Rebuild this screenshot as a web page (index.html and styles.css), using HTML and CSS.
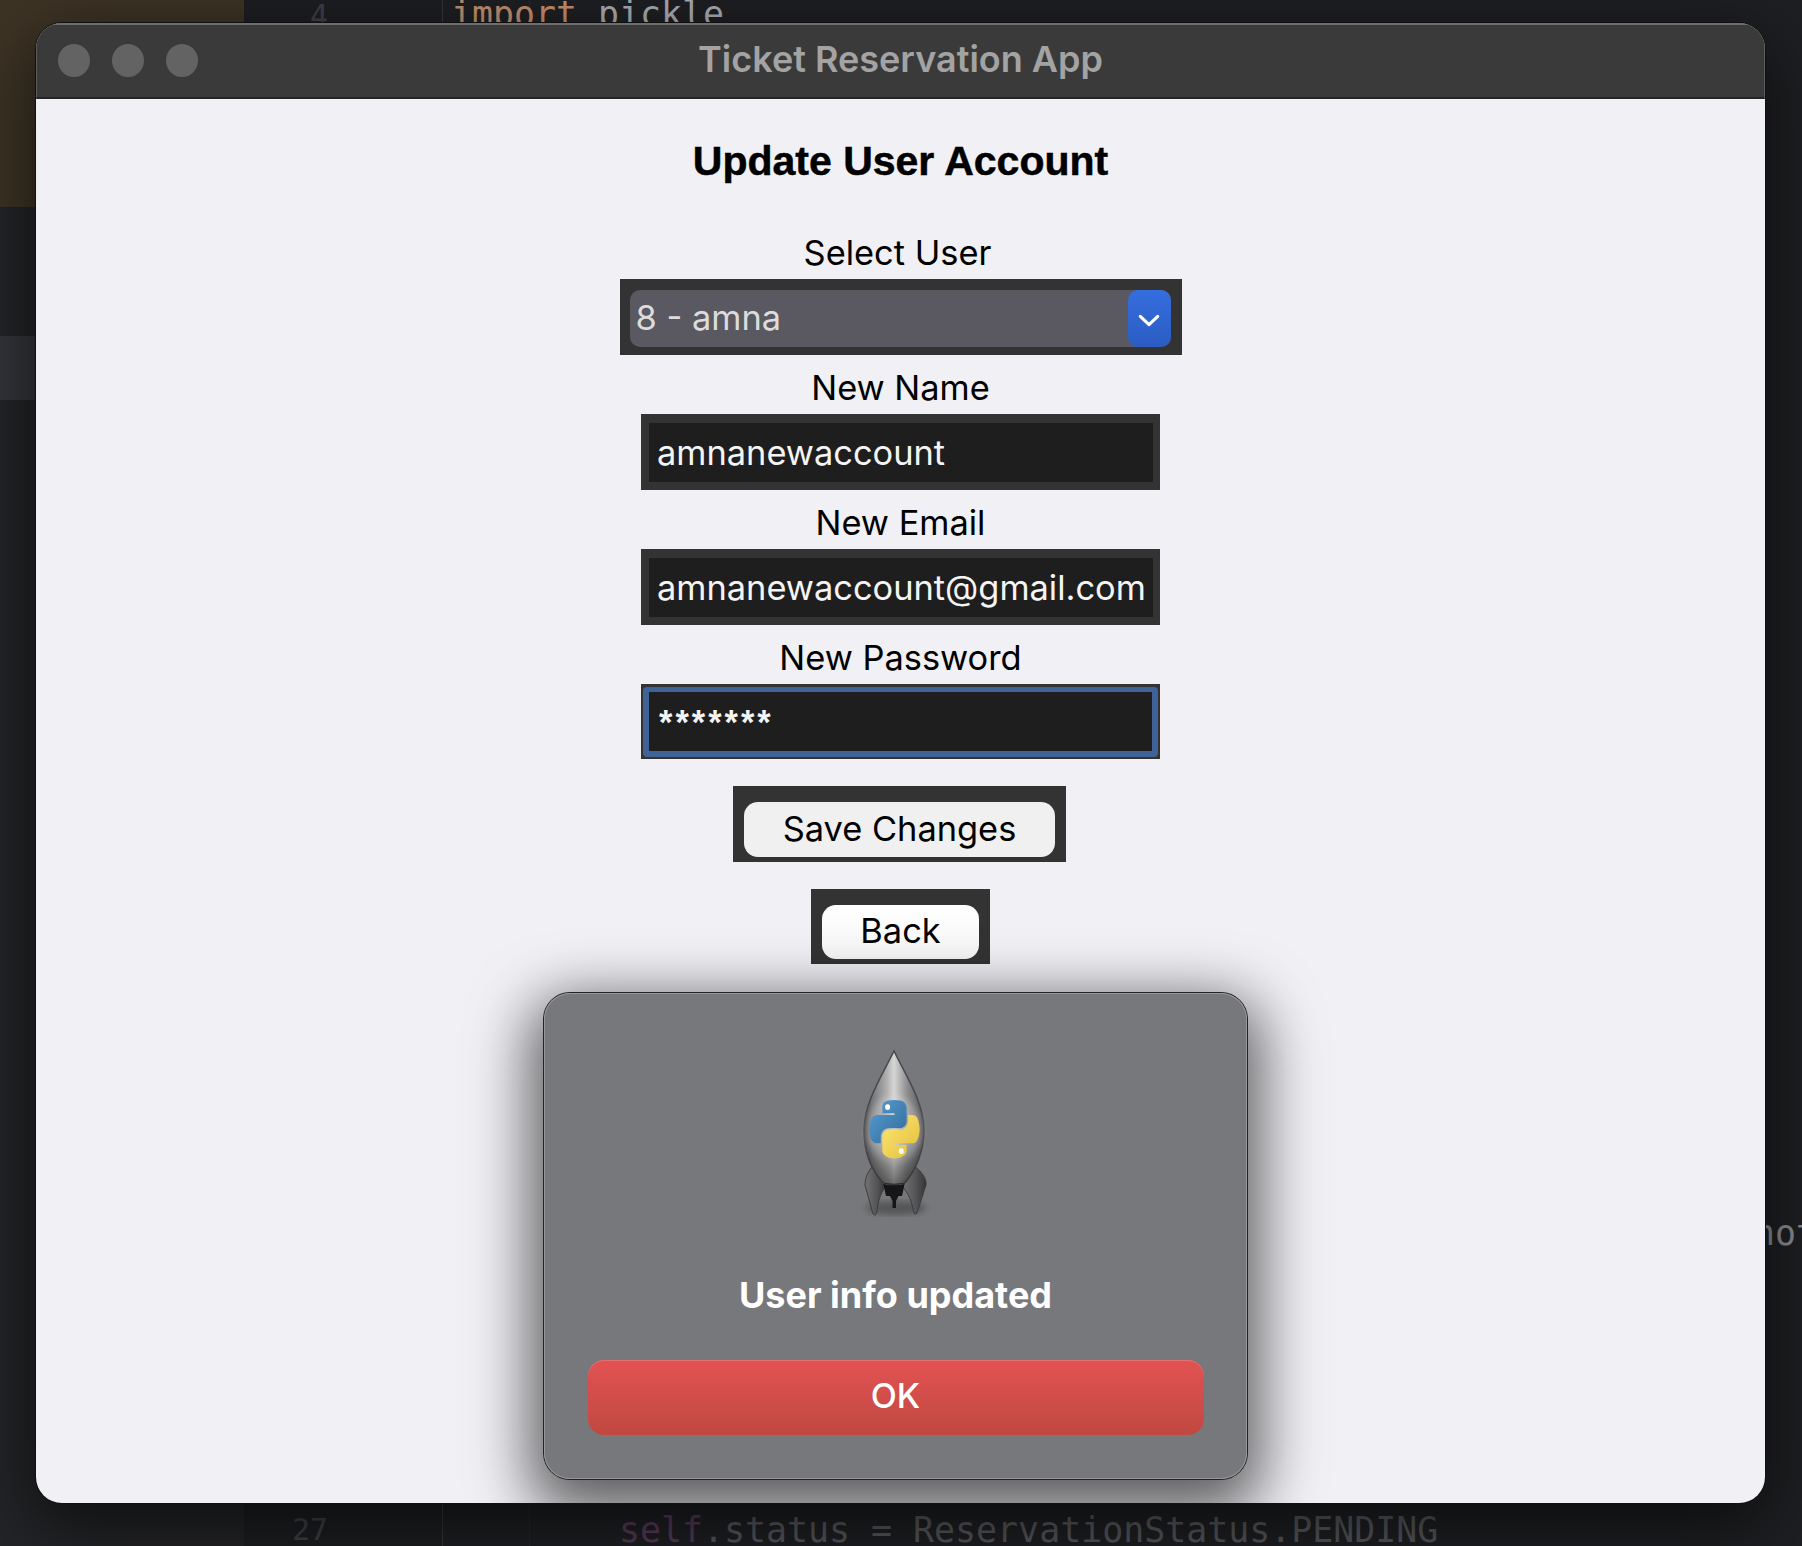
FILE: index.html
```html
<!DOCTYPE html>
<html lang="en">
<head>
<meta charset="utf-8">
<title>Ticket Reservation App</title>
<link rel="stylesheet" href="styles.css">
</head>
<body>
<div class="desktop">
  <div class="editor">
    <aside class="sidebar">
      <div class="sidebar-brown"></div>
      <div class="sidebar-active"></div>
    </aside>
    <div class="gutter">
      <span class="line-no">4</span>
      <span class="line-no line-no-bottom">27</span>
    </div>
    <div class="code">
      <div class="code-line"><span class="kw">import</span> pickle</div>
      <div class="code-line code-mid">not</div>
      <div class="code-line code-bottom"><span class="self">self</span>.status = ReservationStatus.PENDING</div>
    </div>
  </div>

  <section class="window">
    <header class="titlebar">
      <div class="lights"><i class="light"></i><i class="light"></i><i class="light"></i></div>
      <div class="title">Ticket Reservation App</div>
    </header>
    <main class="content">
      <h1 class="heading">Update User Account</h1>
      <div class="label label-select">Select User</div>
      <div class="frame frame-select">
        <div class="select">
          <span class="select-value">8 - amna</span>
          <span class="select-arrow">
            <svg class="chevron" viewBox="0 0 24 14" width="24" height="14"><path d="M2.500 2.500 12 11.500 21.500 2.500" fill="none" stroke="#fff" stroke-width="3.400" stroke-linecap="round" stroke-linejoin="round"/></svg>
          </span>
        </div>
      </div>
      <div class="label">New Name</div>
      <div class="frame frame-input"><div class="input">amnanewaccount</div></div>
      <div class="label">New Email</div>
      <div class="frame frame-input"><div class="input">amnanewaccount@gmail.com</div></div>
      <div class="label">New Password</div>
      <div class="frame frame-input frame-focus"><div class="input input-password">*******</div></div>
      <div class="frame frame-button frame-save"><div class="button button-save">Save Changes</div></div>
      <div class="frame frame-button frame-back"><div class="button button-back">Back</div></div>

      <div class="dialog">
        <svg class="rocket" viewBox="0 0 190 200" width="190" height="200">
          <defs>
            <linearGradient id="body" x1="0" x2="1" y1="0" y2="0">
              <stop offset="0" stop-color="#4a4a4c"/>
              <stop offset=".14" stop-color="#77777a"/>
              <stop offset=".38" stop-color="#b0b0b1"/>
              <stop offset=".5" stop-color="#d6d6d6"/>
              <stop offset=".72" stop-color="#8e8e90"/>
              <stop offset="1" stop-color="#505053"/>
            </linearGradient>
            <linearGradient id="shade" x1="0" x2="0" y1="0" y2="1">
              <stop offset="0" stop-color="#000" stop-opacity="0"/>
              <stop offset=".68" stop-color="#000" stop-opacity="0"/>
              <stop offset="1" stop-color="#000" stop-opacity=".5"/>
            </linearGradient>
            <linearGradient id="fin" x1="0" x2="1" y1="0" y2="0">
              <stop offset="0" stop-color="#737375"/>
              <stop offset=".6" stop-color="#525254"/>
              <stop offset="1" stop-color="#343436"/>
            </linearGradient>
            <linearGradient id="blue" x1="0" x2="1" y1="0" y2="1">
              <stop offset="0" stop-color="#5a9fd4"/>
              <stop offset="1" stop-color="#306998"/>
            </linearGradient>
            <linearGradient id="yellow" x1="0" x2="1" y1="0" y2="1">
              <stop offset="0" stop-color="#ffe873"/>
              <stop offset="1" stop-color="#e0bd3a"/>
            </linearGradient>
            <filter id="soft"><feGaussianBlur stdDeviation="3"/></filter>
            <filter id="tiny"><feGaussianBlur stdDeviation=".45"/></filter>
          </defs>
          <ellipse cx="96" cy="178" rx="30" ry="7" fill="#000" opacity=".28" filter="url(#soft)"/>
          <g filter="url(#tiny)">
            <path d="M75 134C68 140 65 148 65 155L73 184C75 186 76 185 77 182 78 172 80 164 86 156Z" fill="url(#fin)" stroke="#3d3d3f"/>
            <path d="M113 135C121 141 127 148 126 155L117 183C115 185 114 184 113.500 182 112 172 109 164 102 156Z" fill="url(#fin)" stroke="#3d3d3f"/>
            <path d="M83 152H105L102 166H98.500L96 171V178H92.500V171L90 166H86Z" fill="#121213"/>
            <path d="M94 21C84 42 64 72 64 100 64 121 71 140 83 153 88 155 100 155 105 153 116 140 124 121 124 100 124 72 104 42 94 21Z" fill="url(#body)" stroke="#48484b" stroke-width="1.500"/>
            <ellipse cx="94" cy="100" rx="28" ry="34" fill="#dcdcdc" opacity=".35" filter="url(#soft)"/>
            <path d="M94 21C84 42 64 72 64 100 64 121 71 140 83 153 88 155 100 155 105 153 116 140 124 121 124 100 124 72 104 42 94 21Z" fill="url(#shade)"/>
            <g transform="translate(69.500 70) scale(.45 .52)">
              <path fill="url(#blue)" d="M54.900.100C50.300.100 46 .500 42.100 1.200 30.700 3.200 28.600 7.400 28.600 15.100V25.400H55.600V28.800H18.400C10.600 28.800 3.800 33.500 1.700 42.400-.800 52.500-.900 58.900 1.700 69.500 3.600 77.400 8.100 83 15.900 83H25.100V70.800C25.100 62 32.800 54.200 41.900 54.200H68.900C76.400 54.200 82.400 48 82.400 40.600V15.100C82.400 7.900 76.300 2.500 68.900 1.200 64.300.400 59.400.100 54.900.100ZM40.300 8.400C43.100 8.400 45.400 10.700 45.400 13.500 45.400 16.300 43.100 18.600 40.300 18.600 37.500 18.600 35.200 16.300 35.200 13.500 35.200 10.700 37.500 8.400 40.300 8.400Z"/>
              <path fill="url(#yellow)" d="M85.800 28.800V40.600C85.800 49.800 78 57.600 69 57.600H42C34.600 57.600 28.500 63.900 28.500 71.300V96.800C28.500 104 34.800 108.300 42 110.400 50.500 112.900 58.700 113.400 69 110.400 75.800 108.400 82.400 104.400 82.400 96.800V86.500H55.500V83.100H95.900C103.700 83.100 106.700 77.600 109.400 69.500 112.200 61.200 112.100 53.200 109.400 42.400 107.400 34.600 103.800 28.800 95.900 28.800ZM70.600 93.300C73.400 93.300 75.700 95.600 75.700 98.400 75.700 101.200 73.400 103.500 70.600 103.500 67.800 103.500 65.500 101.200 65.500 98.400 65.500 95.600 67.800 93.300 70.600 93.300Z"/>
              <circle cx="40.300" cy="13.500" r="5.500" fill="#fff"/>
              <circle cx="70.600" cy="98.400" r="5.500" fill="#fff"/>
            </g>
          </g>
        </svg>
        <div class="dialog-text">User info updated</div>
        <div class="dialog-ok">OK</div>
      </div>
    </main>
  </section>
</div>
</body>
</html>
```
FILE: styles.css
```css
* { box-sizing: border-box; }
html, body { margin: 0; padding: 0; }
body { width: 1802px; height: 1546px; overflow: hidden; background: #1e1f22; }

.desktop { position: relative; width: 1802px; height: 1546px; overflow: hidden; }

/* Editor behind the window */
.editor {
  display: grid;
  grid-template-columns: 244px 198px 1fr;
  height: 100%;
  font-family: "DejaVu Sans Mono", monospace;
  font-size: 34.900px;
}
.sidebar { display: flex; flex-direction: column; background: #232427; }
.sidebar-brown { height: 207px; background: #3d3325; }
.sidebar-active { height: 64px; margin-top: 129px; background: #33353a; }
.gutter {
  display: flex; flex-direction: column; justify-content: space-between; align-items: flex-end;
  background: #1d1e21; color: #3e4046; padding-right: 114px; height: 100%;
  font-size: 30px;
}
.line-no { margin-top: -4px; line-height: 40px; }
.line-no-bottom { margin: 0 0 -4px; }
.code {
  border-left: 1px solid #34363a;
  background: linear-gradient(#26272a, #26272a) 86px 0 / 1px 100% no-repeat #1e1f22;
  padding-left: 8px;
  display: flex; flex-direction: column;
  color: #a9acb2;
  white-space: nowrap;
}
.code-line { line-height: 40px; }
.code-line:first-child { margin-top: -6px; }
.kw { color: #c48f6e; }
.code-mid { margin-top: 1179px; margin-left: 1303px; color: #8b8c8f; }
.code-bottom { margin-top: auto; margin-bottom: -4px; margin-left: 168px; color: #55565a; }
.self { color: #563a59; }

/* Window */
.window {
  position: absolute; left: 36px; top: 23px; width: 1729px; height: 1480px;
  border-radius: 26px;
  overflow: hidden;
  display: flex; flex-direction: column;
  background: #f0f0f5;
  box-shadow: 0 0 0 1px #111, 0 20px 70px rgba(0, 0, 0, .65);
}
.titlebar {
  position: relative;
  height: 76px;
  flex: none;
  display: flex; align-items: center; justify-content: center;
  background: #3a3a3a;
  border-top: 2px solid #6e6e6e;
  border-left: 1px solid #5c5c5c;
  border-right: 1px solid #5c5c5c;
  border-bottom: 2px solid #242424;
}
.lights { position: absolute; left: 21px; top: 19px; display: flex; gap: 22px; }
.light { width: 32px; height: 33px; border-radius: 50%; background: #636363; }
.title {
  font-family: Inter, "Liberation Sans", sans-serif;
  font-weight: 600; font-size: 36px; color: #a3a3a3;
  line-height: 40px; margin-top: -4px;
}

.content {
  position: relative;
  flex: 1;
  display: flex; flex-direction: column; align-items: center;
  color: #000;
  font-family: Inter, "Liberation Sans", sans-serif;
  font-size: 34.400px;
  font-weight: 420;
}
.heading {
  margin: 0; height: 122px; padding-top: 39px;
  font-family: "Liberation Sans", sans-serif;
  font-size: 41px; line-height: 46px; font-weight: 700;
  -webkit-text-stroke: .5px #000;
}
.label { height: 59px; padding-top: 10px; line-height: 46px; }
.label-select { height: 58px; padding-top: 9px; margin-right: 6px; }

.frame { background: #333; flex: none; }
.frame-select { width: 562px; height: 76px; padding: 11px 11px 8px 10px; }
.select {
  height: 57px; border-radius: 10px; background: #5a5860;
  display: flex; justify-content: space-between;
  color: #dcdcdc; line-height: 56px; padding-left: 6px;
}
.select-arrow {
  width: 43px; border-radius: 10px;
  background: linear-gradient(#356edf, #2b5cc2);
  display: flex; align-items: center; justify-content: center;
}
.chevron { width: 22px; height: 13px; margin-top: 4px; }

.frame-input { width: 519px; height: 76px; padding: 9px 7px 8px 8px; }
.input {
  height: 59px; background: #1e1e1e; color: #f4f4f4;
  line-height: 59px; padding-left: 8px; white-space: nowrap;
}
.frame-focus { padding: 3px 2px 2px; height: 75px; }
.input-password {
  height: 70px; border-style: solid; border-color: #3f6396; border-width: 5px 6px 6px;
  border-radius: 4px;
  line-height: 60px; padding-left: 10px; letter-spacing: 3px;
  font-family: "Liberation Sans", sans-serif; font-weight: 700;
}

.frame-button { height: 76px; padding: 16px 11px 5px; }
.frame-save { width: 333px; margin-top: 27px; margin-right: 2px; }
.frame-back { width: 179px; margin-top: 27px; height: 75px; }
.button {
  height: 55px; border-radius: 14px; text-align: center; line-height: 53px;
}
.button-save { background: #f0f0f0; }
.button-back { background: linear-gradient(#fff, #f6f6f6); height: 54px; line-height: 52px; }

/* Alert */
.dialog {
  position: absolute; left: 508px; top: 894px; width: 703px; height: 486px;
  border-radius: 26px;
  background: #77787b;
  box-shadow: 0 0 0 1px #232323, inset 0 0 0 1px #98989a, 0 20px 60px 14px rgba(0, 0, 0, .62);
  display: flex; flex-direction: column; align-items: center;
  padding-top: 37px;
  color: #fff;
}
.rocket { flex: none; margin-right: 2px; }
.dialog-text {
  margin-top: 41px; height: 48px; line-height: 48px;
  font-weight: 700; font-size: 36px;
}
.dialog-ok {
  margin-top: 41px;
  width: 616px; height: 75px; border-radius: 16px; flex: none;
  background: linear-gradient(#e25353, #c04840);
  box-shadow: inset 0 1px 0 #e57070;
  text-align: center; line-height: 72px; font-size: 34px; font-weight: 500;
}
```
